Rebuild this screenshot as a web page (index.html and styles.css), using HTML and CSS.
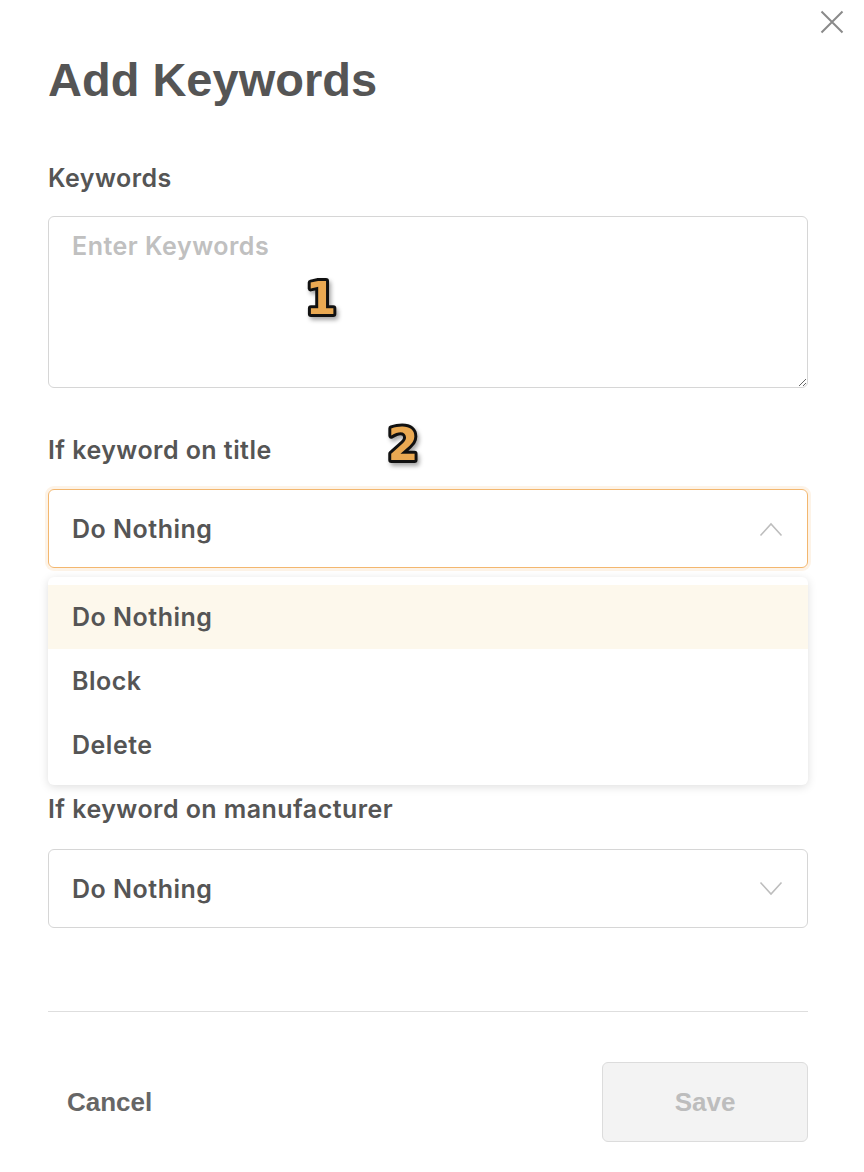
FILE: index.html
```html
<!DOCTYPE html>
<html lang="en">

<head>
    <meta charset="UTF-8">
    <title>Add Keywords</title>
    <link rel="stylesheet" href="styles.css">
</head>

<body>
    <div class="modal">
        <button class="close" type="button" aria-label="Close">
            <svg width="24" height="24" viewBox="0 0 24 24">
                <path d="M1.5 1.5 L22.5 22.5 M22.5 1.5 L1.5 22.5" stroke="#8a8a8a" stroke-width="2" fill="none" />
            </svg>
        </button>

        <h1>Add Keywords</h1>

        <form class="form">
            <label class="label" for="keywords">Keywords</label>
            <textarea id="keywords" class="textarea" placeholder="Enter Keywords"></textarea>

            <label class="label label-gap">If keyword on title</label>
            <div class="select select-open">
                <span>Do Nothing</span>
                <svg class="chevron" width="24" height="16" viewBox="0 0 24 16">
                    <path d="M1.5 14.5 L12 3 L22.5 14.5" stroke="#bdbdbd" stroke-width="1.6" fill="none" />
                </svg>
            </div>
            <ul class="menu">
                <li class="menu-item active">Do Nothing</li>
                <li class="menu-item">Block</li>
                <li class="menu-item">Delete</li>
            </ul>

            <label class="label">If keyword on manufacturer</label>
            <div class="select select-last">
                <span>Do Nothing</span>
                <svg class="chevron" width="24" height="16" viewBox="0 0 24 16">
                    <path d="M1.5 1.5 L12 13 L22.5 1.5" stroke="#bdbdbd" stroke-width="1.6" fill="none" />
                </svg>
            </div>

            <div class="footer">
                <button type="button" class="btn-cancel">Cancel</button>
                <button type="submit" class="btn-save" disabled>Save</button>
            </div>
        </form>

        <!-- annotation marks -->
        <svg class="mark mark-1" width="50" height="56" viewBox="0 0 50 56">
            <text x="25" y="46" text-anchor="middle">1</text>
        </svg>
        <svg class="mark mark-2" width="50" height="56" viewBox="0 0 50 56">
            <text x="25" y="46" text-anchor="middle">2</text>
        </svg>
    </div>
</body>

</html>
```

FILE: styles.css
```css
body {
    margin: 0;
    font-family: Inter, "Noto Sans", sans-serif;
    color: #555;
    background: #fff;
}

.modal {
    position: relative;
    width: 864px;
    height: 1172px;
    box-sizing: border-box;
    padding: 52px 56px 0 48px;
}

.close {
    position: absolute;
    top: 10px;
    right: 20px;
    padding: 0;
    border: none;
    background: none;
    cursor: pointer;
}

.close svg {
    display: block;
}

h1 {
    margin: 0;
    font-family: "Liberation Sans", Arial, sans-serif;
    font-size: 47px;
    line-height: 56px;
    font-weight: 700;
    color: #555;
}

.form {
    display: flex;
    flex-direction: column;
    margin-top: 55px;
}

.label {
    display: block;
    font-size: 25px;
    letter-spacing: 0.45px;
    line-height: 30px;
    font-weight: 600;
    color: #555;
    margin-bottom: 23px;
}

.label-gap {
    margin-top: 47px;
}

.textarea {
    height: 172px;
    box-sizing: border-box;
    padding: 14px 23px;
    border: 1.5px solid #d6d6d6;
    border-radius: 6px;
    font-family: Inter, sans-serif;
    font-size: 25px;
    letter-spacing: 0.5px;
    font-weight: 600;
    color: #555;
    resize: vertical;
    outline: none;
}

.textarea::placeholder {
    color: #c0c0c0;
}

.select {
    display: flex;
    align-items: center;
    justify-content: space-between;
    height: 79px;
    box-sizing: border-box;
    margin-top: 1px;
    padding: 0 24px 0 23px;
    border: 1.5px solid #d6d6d6;
    border-radius: 6px;
    font-size: 25px;
    letter-spacing: 0.5px;
    font-weight: 600;
    color: #555;
}

.select-open {
    border-color: #f3b76f;
    box-shadow: 0 0 0 3px rgba(245, 190, 120, 0.18);
}

.select-last {
    margin-top: 2px;
}

.chevron {
    display: block;
}

.menu {
    list-style: none;
    margin: 9px 0 9px;
    padding: 8px 0;
    background: #fff;
    border-radius: 6px;
    box-shadow: 0 2px 10px rgba(0, 0, 0, 0.13);
}

.menu-item {
    height: 64px;
    display: flex;
    align-items: center;
    padding: 0 24px;
    font-size: 25px;
    letter-spacing: 0.5px;
    font-weight: 600;
    color: #555;
}

.menu-item.active {
    background: #fdf8ec;
}

.footer {
    display: flex;
    align-items: center;
    justify-content: space-between;
    margin-top: 83px;
    padding-top: 50px;
    border-top: 1.5px solid #dedede;
}

.btn-cancel {
    padding: 0 19px;
    border: none;
    background: none;
    font-family: "Liberation Sans", Arial, sans-serif;
    font-size: 26px;
    font-weight: 700;
    color: #666;
    cursor: pointer;
}

.btn-save {
    width: 206px;
    height: 80px;
    border: 1.5px solid #dcdcdc;
    border-radius: 6px;
    background: #f3f3f3;
    font-family: "Liberation Sans", Arial, sans-serif;
    font-size: 26px;
    font-weight: 700;
    color: #bdbdbd;
}

.mark {
    position: absolute;
    overflow: visible;
    filter: drop-shadow(2px 3px 2px rgba(0, 0, 0, 0.35));
}

.mark text {
    font-family: "DejaVu Sans", sans-serif;
    font-weight: 700;
    font-size: 44px;
    fill: #eaa952;
    stroke: #111;
    stroke-width: 6px;
    stroke-linejoin: round;
    paint-order: stroke;
}

.mark-1 {
    left: 296px;
    top: 268px;
}

.mark-2 {
    left: 378px;
    top: 414px;
}
```
